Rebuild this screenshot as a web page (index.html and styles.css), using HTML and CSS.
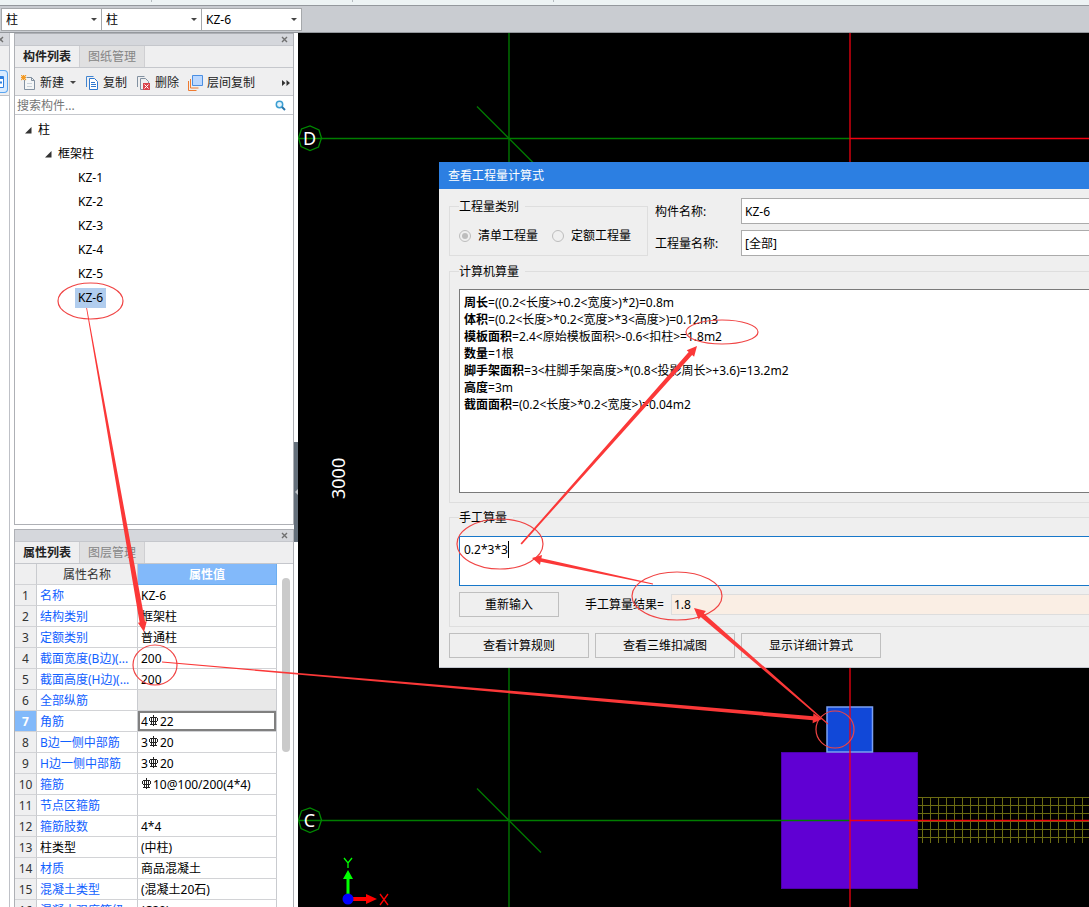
FILE: index.html
```html
<!DOCTYPE html>
<html lang="zh-CN">
<head>
<meta charset="utf-8">
<title>查看工程量计算式</title>
<link rel="stylesheet" href="styles.css">
</head>
<body>
<svg class="defs" width="0" height="0" aria-hidden="true">
  <symbol id="close" viewBox="0 0 7 7"><path d="M1 1l5 5M6 1l-5 5" stroke="#707070" stroke-width="1.4" fill="none"/></symbol>
  <symbol id="rebar" viewBox="0 0 10 12"><path d="M4.500 0v11M1 2.500h7M0.500 3v3M8.500 3v3M1 6.500h7M2.500 2v7M6.500 2v7M1 9.500h7" stroke="#222" stroke-width="1" fill="none" shape-rendering="crispEdges"/></symbol>
</svg>
<div class="ribbon"><i></i><i></i><i></i></div>
<header class="selectors">
  <label class="pick"><select aria-label="构件大类"><option>柱</option></select></label>
  <label class="pick"><select aria-label="构件类型"><option>柱</option></select></label>
  <label class="pick"><select aria-label="构件"><option>KZ-6</option></select></label>
</header>
<main class="workspace">
  <aside class="rail">
    <div class="strip"><button class="x" aria-label="关闭导航"><svg width="7" height="7"><use href="#close"/></svg></button></div>
    <div class="rail-tools"><button class="rail-btn" aria-label="导航"><svg width="5" height="14" viewBox="0 0 5 14"><path d="M0 1.500h3.500v11h-3.500" fill="#fff" stroke="#2d7fe0"/><path d="M0 3h4M0 7.500h2" stroke="#2d7fe0" stroke-width="2"/></svg></button></div>
  </aside>
  <div class="panels">
    <section class="panel components">
      <div class="strip"><button class="x" aria-label="关闭构件列表"><svg width="7" height="7"><use href="#close"/></svg></button></div>
      <nav class="tabs"><button class="tab on">构件列表</button><button class="tab">图纸管理</button></nav>
      <div class="tools">
        <button class="tool new"><svg width="15" height="16" viewBox="0 0 15 16"><path d="M3.500 5v9.500h10v-9l-3-3h-5" fill="#f4f6f7" stroke="#8291a1"/><path d="M10.500 2.500v3h3" fill="none" stroke="#8291a1"/><path d="M6 8.500h5M6 11.500h5" stroke="#c8d0d8"/><path d="M0 0l5 5M5 0l-5 5M2.500 0v5M0 2.500h5" stroke="#f49a22" stroke-width="1.100"/></svg>新建<i class="down"></i></button>
        <button class="tool copy"><svg width="14" height="16" viewBox="0 0 14 16"><path d="M1.500 12v-10.500h7" fill="none" stroke="#4385d0"/><path d="M4.500 3.500h5l3 3v8h-8z" fill="#fff" stroke="#2f78cf"/><path d="M6 7.500h4M6 9.500h5M6 11.500h5" stroke="#2f78cf"/></svg>复制</button>
        <button class="tool delete"><svg width="15" height="16" viewBox="0 0 15 16"><path d="M1.500 12v-10.500h7M4.500 3.500h5l3 3v8h-8z" fill="none" stroke="#8291a1"/><path d="M7 8h7v7H7z" fill="#d9434b"/><path d="M8.500 9.500l4 4M12.500 9.500l-4 4" stroke="#fff"/></svg>删除</button>
        <button class="tool layer"><svg width="15" height="16" viewBox="0 0 15 16"><path d="M.5 6v9.500h8M2.500 4v9h8" fill="none" stroke="#ee7a30"/><path d="M4.500.5h10v10h-10z" fill="#bcd8ff" stroke="#4b8fe2"/></svg>层间复制</button>
        <button class="more" aria-label="更多"><svg width="8" height="6" viewBox="0 0 8 6"><path d="M0 0l3.500 3L0 6zM4.500 0L8 3L4.500 6z" fill="#333"/></svg></button>
      </div>
      <div class="search"><input type="text" placeholder="搜索构件..." aria-label="搜索构件"><svg width="11" height="11" viewBox="0 0 11 11"><circle cx="4.500" cy="4.500" r="3.200" fill="#e4f4fc" stroke="#3b9ed2" stroke-width="1.500"/><path d="M7 7l3 3" stroke="#2775aa" stroke-width="2"/></svg></div>
      <ul class="tree">
        <li class="l1"><svg width="7" height="7"><path d="M6.500 0v6.500H0z" fill="#333"/></svg>柱</li>
        <li class="l2"><svg width="7" height="7"><path d="M6.500 0v6.500H0z" fill="#333"/></svg>框架柱</li>
        <li class="l3"><span>KZ-1</span></li>
        <li class="l3"><span>KZ-2</span></li>
        <li class="l3"><span>KZ-3</span></li>
        <li class="l3"><span>KZ-4</span></li>
        <li class="l3"><span>KZ-5</span></li>
        <li class="l3"><span class="current">KZ-6</span></li>
      </ul>
    </section>
    <section class="panel properties">
      <div class="strip"><button class="x" aria-label="关闭属性列表"><svg width="7" height="7"><use href="#close"/></svg></button></div>
      <nav class="tabs"><button class="tab on">属性列表</button><button class="tab">图层管理</button></nav>
      <div class="sheet">
        <table>
          <colgroup><col class="c-no"><col class="c-name"><col></colgroup>
          <thead><tr><th></th><th>属性名称</th><th class="active">属性值</th></tr></thead>
          <tbody>
            <tr><th>1</th><td>名称</td><td>KZ-6</td></tr>
            <tr><th>2</th><td>结构类别</td><td>框架柱</td></tr>
            <tr><th>3</th><td>定额类别</td><td>普通柱</td></tr>
            <tr><th>4</th><td>截面宽度(B边)(...</td><td>200</td></tr>
            <tr><th>5</th><td>截面高度(H边)(...</td><td>200</td></tr>
            <tr><th>6</th><td>全部纵筋</td><td class="disabled"></td></tr>
            <tr class="editing"><th>7</th><td>角筋</td><td>4<svg class="rebar"><use href="#rebar"/></svg>22</td></tr>
            <tr><th>8</th><td>B边一侧中部筋</td><td>3<svg class="rebar"><use href="#rebar"/></svg>20</td></tr>
            <tr><th>9</th><td>H边一侧中部筋</td><td>3<svg class="rebar"><use href="#rebar"/></svg>20</td></tr>
            <tr><th>10</th><td>箍筋</td><td><svg class="rebar"><use href="#rebar"/></svg>10@100/200(4*4)</td></tr>
            <tr><th>11</th><td>节点区箍筋</td><td></td></tr>
            <tr><th>12</th><td>箍筋肢数</td><td>4*4</td></tr>
            <tr class="fixed"><th>13</th><td>柱类型</td><td>(中柱)</td></tr>
            <tr><th>14</th><td>材质</td><td>商品混凝土</td></tr>
            <tr><th>15</th><td>混凝土类型</td><td>(混凝土20石)</td></tr>
            <tr><th>16</th><td>混凝土强度等级</td><td>(C20)</td></tr>
          </tbody>
        </table>
        <div class="scroll"><div class="thumb"></div></div>
      </div>
    </section>
  </div>
  <div class="splitter"><button aria-label="收起面板"><svg width="3" height="6"><path d="M3 0v6L0 3z" fill="#c4c8cc"/></svg></button></div>
  <section class="viewport">
    <svg class="drawing" aria-label="绘图区">
      <defs><pattern id="mesh" x="920" y="797" width="8" height="8" patternUnits="userSpaceOnUse"><path d="M2.500 0v8M0 .5h8" stroke="#6b6b12" fill="none"/></pattern></defs>
      <g transform="translate(-298 -33)" fill="none">
        <rect x="918" y="797" width="2000" height="46" fill="url(#mesh)"/>
        <rect x="781.500" y="752.500" width="136" height="136" fill="#6000d3" stroke="#4b00a8"/>
        <rect x="827" y="707" width="45.500" height="45" fill="#1148d8" stroke="#7ba0f4" stroke-width="1.500"/>
        <path d="M509 33v2000M298 138.500h552M298 820.500h552" stroke="#007d00" stroke-width="1.300"/>
        <path d="M477 106.500l64 64M477 788.500l64 64" stroke="#007800" stroke-width="1.300"/>
        <path d="M850 33v2000M850 138.500h2000M850 820.500h2000" stroke="#f00010" stroke-width="1.300"/>
        <g stroke="#008800" stroke-width="1.300"><path d="M298.500 138l3-9 8.500-3 9 4 2.500 8-3 9-8.500 3.500-9-4z"/><path d="M298.500 820l3-9 8.500-3 9 4 2.500 8-3 9-8.500 3.500-9-4z"/></g>
        <path d="M346.500 899v-20h-3.500l5-9 5 9h-3.500v20z" fill="#0f0"/>
        <path d="M350 897h16v-3l11 5-11 5v-3h-16z" fill="#f00"/>
        <circle cx="348" cy="899" r="5.500" fill="#00f"/>
        <path d="M344 858l4 5 4-5M348 863v5" stroke="#0f0" stroke-width="1.300"/>
        <path d="M380 894l8 11M388 894l-8 11" stroke="#f00" stroke-width="1.300"/>
        <text class="axis" x="309.500" y="145">D</text>
        <text class="axis" x="309.500" y="827">C</text>
        <text class="axis" transform="translate(345 499) rotate(-90)">3000</text>
      </g>
    </svg>
    <form class="dialog">
      <h1>查看工程量计算式</h1>
      <div class="content">
        <div class="head">
          <fieldset class="kind"><legend>工程量类别</legend>
            <div class="radios"><label><input type="radio" name="kind" checked>清单工程量</label><label><input type="radio" name="kind">定额工程量</label></div>
          </fieldset>
          <div class="fields">
            <label for="member">构件名称:</label><input id="member" type="text" value="KZ-6">
            <label for="quantity">工程量名称:</label><input id="quantity" type="text" value="[全部]">
          </div>
        </div>
        <fieldset class="auto"><legend>计算机算量</legend>
          <div class="result">
            <p><b>周长</b>=((0.2&lt;长度&gt;+0.2&lt;宽度&gt;)*2)=0.8m</p>
            <p><b>体积</b>=(0.2&lt;长度&gt;*0.2&lt;宽度&gt;*3&lt;高度&gt;)=0.12m3</p>
            <p><b>模板面积</b>=2.4&lt;原始模板面积&gt;-0.6&lt;扣柱&gt;=1.8m2</p>
            <p><b>数量</b>=1根</p>
            <p><b>脚手架面积</b>=3&lt;柱脚手架高度&gt;*(0.8&lt;投影周长&gt;+3.6)=13.2m2</p>
            <p><b>高度</b>=3m</p>
            <p><b>截面面积</b>=(0.2&lt;长度&gt;*0.2&lt;宽度&gt;)=0.04m2</p>
          </div>
        </fieldset>
        <fieldset class="manual"><legend>手工算量</legend>
          <div class="entry"><textarea aria-label="手工算量">0.2*3*3</textarea><i class="caret"></i></div>
          <div class="outcome"><button type="button" class="btn">重新输入</button><label for="sum">手工算量结果=</label><input id="sum" type="text" value="1.8" readonly></div>
        </fieldset>
        <div class="actions"><button type="button" class="btn">查看计算规则</button><button type="button" class="btn">查看三维扣减图</button><button type="button" class="btn">显示详细计算式</button></div>
      </div>
    </form>
  </section>
</main>
<svg class="marks" aria-hidden="true">
  <g fill="none" stroke="#f04444" stroke-width="1.200">
    <ellipse cx="90.500" cy="301" rx="32.500" ry="18"/>
    <ellipse cx="155" cy="665" rx="22" ry="20"/>
    <ellipse cx="722" cy="332" rx="36" ry="12"/>
    <ellipse cx="500" cy="544" rx="43" ry="25"/>
    <ellipse cx="677" cy="596" rx="45" ry="24"/>
    <ellipse cx="835" cy="729.500" rx="19" ry="18.500"/>
  </g>
  <g fill="#fb3838">
    <path d="M86.200 308h.8L145 621.500l1.800-.3L144 632l-6.100-9.200 1.700-.3z"/>
    <path d="M162 661.500L813.200 716.200l.2-3L822 719l-9.400 4.200.2-3L162 662.500z"/>
    <path d="M828.300 723.600L703.900 613.400l2-2.400L694 608l4.700 11.400 2-2.400L827.700 724.400z"/>
    <path d="M653 583.600L541.400 558.200l.6-3.200-10 3 8 7 .6-3.200L653 584.400z"/>
    <path d="M520.500 543.500L688.700 352l-2-1.800L697 346l-2.900 10.800-2-1.800L521.800 544.500z"/>
  </g>
</svg>
</body>
</html>
```
FILE: styles.css
```css
* { box-sizing: border-box; }
body {
  position: relative;
  display: flex;
  flex-direction: column;
  height: 100vh;
  margin: 0;
  overflow: hidden;
  background: #fff;
  color: #000;
  font: 12px/16px "Noto Sans", "Noto Sans CJK SC", sans-serif;
}
button, input, select, textarea { margin: 0; font: inherit; color: inherit; }
button { padding: 0; border: 0; background: none; }
svg { flex: none; }
.defs { position: absolute; }

.ribbon { display: flex; flex: none; gap: 200px; height: 5px; padding-left: 151px; background: #edf3f4; }
.ribbon i { width: 1px; height: 2px; background: #b5bcc0; }
.selectors { display: flex; flex: none; height: 28px; padding: 2px 0 1px 1px; background: #c9ccd1; border-top: 1px solid #94989d; border-bottom: 1px solid #94989d; }
.pick { position: relative; width: 101px; margin-right: -1px; }
.pick select { width: 100%; height: 23px; padding: 0 4px; appearance: none; border: 1px solid #a5a8ab; border-radius: 0; background: #fff; }
.pick::after { content: ""; position: absolute; top: 10px; right: 5px; border: 3px solid transparent; border-top-color: #444; border-bottom: 0; }

.workspace { display: flex; flex: 1; min-height: 0; }
.rail { flex: none; width: 10px; overflow: hidden; border-right: 1px solid #bfc1c7; }
.rail-tools { height: 50px; padding-top: 24px; background: #efeff0; border-bottom: 1px solid #bfc1c7; }
.rail-btn { display: flex; align-items: center; width: 8px; height: 23px; border: 1px solid #59a4ef; border-left: 0; border-radius: 0 4px 4px 0; background: #d9ebff; }
.panels { display: flex; flex: none; flex-direction: column; gap: 4px; width: 280px; margin-left: 4px; }
.panel { display: flex; flex-direction: column; min-height: 0; overflow: hidden; border: 1px solid #aeb0b5; }
.components { flex: 492 1 0; }
.properties { flex: 378 1 0; border-bottom: 0; }
.strip { display: flex; flex: none; align-items: center; justify-content: flex-end; height: 12px; padding-right: 5px; background: #d5d7dc; border-bottom: 1px solid #c5c7cc; }
.rail .strip { height: 13px; }
.x { display: flex; }
.tabs { display: flex; flex: none; height: 22px; background: #efeff0; border-bottom: 1px solid #c5c7cc; }
.tab { width: 65px; background: #e0e0e1; color: #858585; border-right: 1px solid #cfcfd2; }
.tab.on { background: #efeff0; color: #222; font-weight: 700; }
.tools { display: flex; flex: none; align-items: center; height: 28px; padding: 2px 3px 0 6px; background: #efeff0; border-bottom: 1px solid #c5c7cc; color: #222; }
.tool { display: flex; align-items: center; gap: 4px; margin-right: 9px; white-space: nowrap; }
.down { margin-left: 2px; border: 3px solid transparent; border-top-color: #444; border-bottom: 0; }
.more { display: flex; margin-left: auto; }
.search { display: flex; flex: none; align-items: center; height: 19px; padding-right: 7px; border-bottom: 1px solid #c5c7cc; }
.search input { flex: 1; min-width: 0; height: 18px; padding: 0 2px; border: 0; outline: 0; }
.search input::placeholder { color: #757575; opacity: 1; }
.tree { flex: 1; margin: 0; padding: 3px 0 0; list-style: none; }
.tree li { display: flex; align-items: center; gap: 6px; height: 24px; }
.l1 { padding-left: 10px; }
.l2 { padding-left: 30px; }
.l3 { padding-left: 60px; }
.l3 span { padding: 2px 3px; }
.l3 .current { background: #b1cdee; }

.sheet { display: flex; flex: 1; min-height: 0; overflow: hidden; }
table { flex: none; width: 262px; border-collapse: separate; border-spacing: 0; table-layout: fixed; }
.c-no { width: 22px; }
.c-name { width: 101px; }
tr { height: 21px; }
th, td { height: 21px; padding: 2px 3px 0; overflow: hidden; line-height: 16px; text-align: left; white-space: nowrap; border-right: 1px solid #c9cbcf; border-bottom: 1px solid #d2d3d6; }
th { padding: 2px 0 0; background: #efeff0; color: #333; font-weight: 400; text-align: center; }
td:nth-child(2) { color: #1060ff; }
td:last-child { padding-top: 1px; }
.fixed td:nth-child(2) { color: #000; }
th.active { background: #82b9fa; color: #fff; border-color: #6caef0; font-weight: 700; }
.editing th { background: #82b9fa; color: #fff; font-weight: 700; }
.editing td:last-child { box-shadow: inset 0 0 0 2px #808080; }
td.disabled { background: #e8e8e8; }
.rebar { width: 10px; height: 12px; margin: 0 1px; vertical-align: -1px; }
.scroll { flex: 1; padding: 14px 3px 0 5px; }
.thumb { height: 174px; border-radius: 4px; background: #cacaca; }
.splitter { display: flex; flex: none; flex-direction: column; width: 4px; }
.splitter button { display: flex; align-items: center; justify-content: flex-end; height: 100px; margin-top: 409px; background: #65707b; }

.viewport { position: relative; flex: 1; min-width: 0; overflow: hidden; background: #000; }
.drawing { display: block; width: 100%; height: 100%; }
.axis { fill: #fff; font-size: 18px; }
.axis:not([transform]) { text-anchor: middle; }
.dialog { position: absolute; top: 129px; left: 141px; right: -20px; margin: 0; background: #efefef; border-bottom: 1px solid #c4c8d0; }
.dialog h1 { margin: 0; padding: 6px 9px 5px; background: #2c7fe2; color: #fff; font-size: 12px; font-weight: 400; line-height: 16px; }
.content { padding: 9px 0 9px 10px; }
fieldset { min-width: 0; margin: 0; padding: 0 9px; border: 1px solid #dedede; }
legend { padding: 2px 6px 0 0; line-height: 14px; }
.head { display: flex; gap: 7px; margin-bottom: 7px; }
.kind { flex: none; width: 199px; padding-top: 14px; padding-bottom: 11px; }
.radios { display: flex; gap: 14px; }
.radios label { display: flex; align-items: center; gap: 7px; white-space: nowrap; }
.radios input { display: flex; align-items: center; justify-content: center; width: 12px; height: 12px; appearance: none; border: 1px solid #bdbdbd; border-radius: 50%; }
.radios input:checked::before { content: ""; width: 6px; height: 6px; border-radius: 50%; background: #bdbdbd; }
.fields { display: grid; flex: 1; grid-template-columns: 86px 1fr; grid-auto-rows: 26px; row-gap: 6px; align-items: center; }
.fields label { padding-top: 2px; }
.fields input { width: 100%; height: 26px; padding: 0 3px; border: 1px solid #ababab; background: #fff; }
.auto { margin-bottom: 6px; padding-top: 10px; padding-bottom: 9px; }
.result { min-height: 204px; padding: 4px; background: #fff; border: 1px solid #7a7a7a; line-height: 17px; }
.result p { margin: 0; white-space: nowrap; }
.manual { padding-top: 11px; padding-bottom: 9px; }
.entry { position: relative; margin-bottom: 6px; }
.entry textarea { display: block; width: 100%; height: 50px; padding: 5px 4px; resize: none; border: 1px solid #1777c9; border-radius: 0; outline: 0; background: #fff; }
.caret { position: absolute; top: 5px; left: 49px; width: 1px; height: 17px; background: #000; }
.outcome { display: flex; align-items: center; }
.btn { width: 140px; height: 25px; border: 1px solid #bfbfbf; background: #efefef; }
.outcome .btn { width: 100px; margin-right: 26px; }
.outcome label { width: 86px; white-space: nowrap; }
.outcome input { flex: 1; min-width: 0; height: 21px; padding: 0 2px; border: 1px solid #ddd; background: #faeee4; }
.actions { display: flex; gap: 6px; margin-top: 6px; }

.marks { position: absolute; top: 0; left: 0; width: 100%; height: 100%; pointer-events: none; }
```
